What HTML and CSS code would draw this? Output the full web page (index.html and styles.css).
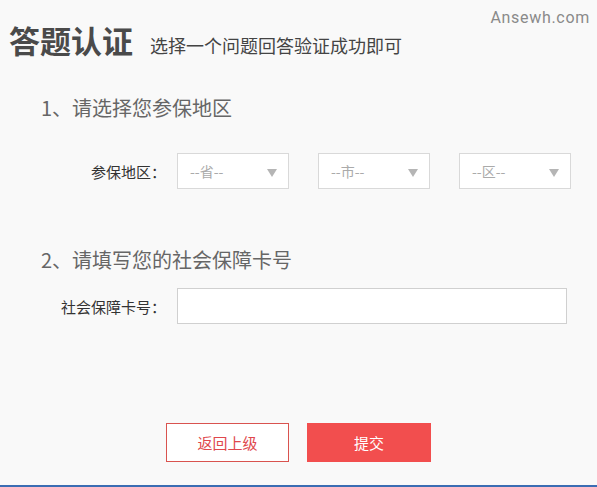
FILE: index.html
```html
<!DOCTYPE html>
<html lang="zh-CN">
  <head>
    <meta charset="UTF-8" />
    <meta name="viewport" content="width=device-width, initial-scale=1.0" />
    <title>答题认证</title>
    <link rel="stylesheet" href="styles.css">
  </head>
  <body>
    <div class="page">
      <div class="watermark">Ansewh.com</div>
      <header class="head">
        <h1 class="title">答题认证</h1>
        <span class="subtitle">选择一个问题回答验证成功即可</span>
      </header>

      <div class="step step-one">
        <h2 class="step-title">1、请选择您参保地区</h2>
        <div class="row">
          <label class="row-label">参保地区：</label>
          <div class="selects">
            <div class="select"><span>--省--</span><i class="arrow"></i></div>
            <div class="select"><span>--市--</span><i class="arrow"></i></div>
            <div class="select"><span>--区--</span><i class="arrow"></i></div>
          </div>
        </div>
      </div>

      <div class="step step-two">
        <h2 class="step-title">2、请填写您的社会保障卡号</h2>
        <div class="row">
          <label class="row-label">社会保障卡号：</label>
          <input class="card-input" type="text" />
        </div>
      </div>

      <div class="actions">
        <button class="btn btn-back">返回上级</button>
        <button class="btn btn-submit">提交</button>
      </div>
    </div>
  </body>
</html>
```

FILE: styles.css
```css
* {
  box-sizing: border-box;
}
body {
  margin: 0;
  background-color: #f9f9f9;
  font-family: "Noto Sans CJK SC", "Noto Sans", sans-serif;
}
.page {
  position: relative;
  height: 487px;
  border-bottom: 2px solid #3b6db3;
  display: flex;
  flex-direction: column;
}
.watermark {
  position: absolute;
  top: 8px;
  right: 7px;
  font-family: Roboto, "Liberation Sans", sans-serif;
  font-size: 16px;
  letter-spacing: 0.7px;
  color: #8a8a8a;
}
.head {
  display: flex;
  align-items: baseline;
  padding: 20px 0 0 9px;
}
.title {
  margin: 0;
  font-size: 31px;
  line-height: 40px;
  font-weight: bold;
  color: #4a4a4a;
}
.subtitle {
  margin-left: 17px;
  font-size: 18px;
  color: #444;
}
.step-title {
  margin: 0;
  padding-left: 41px;
  font-size: 20px;
  line-height: 28px;
  font-weight: normal;
  color: #666;
}
.step-one {
  margin-top: 34px;
}
.step-two {
  margin-top: 57px;
}
.row {
  display: flex;
  align-items: center;
}
.step-one .row {
  margin-top: 31px;
}
.step-two .row {
  margin-top: 14px;
}
.row-label {
  width: 168px;
  text-align: right;
  padding-right: 2px;
  font-size: 15px;
  color: #333;
}
.selects {
  display: flex;
  gap: 29px;
  margin-left: 9px;
}
.select {
  width: 112px;
  height: 36px;
  border: 1px solid #d9d9d9;
  background-color: #fff;
  display: flex;
  align-items: center;
  justify-content: space-between;
  padding: 0 11px 0 12px;
  font-size: 14px;
  color: #aaa;
}
.arrow {
  width: 0;
  height: 0;
  border-left: 5px solid transparent;
  border-right: 5px solid transparent;
  border-top: 8px solid #b5b5b5;
  margin-top: 3px;
}
.card-input {
  width: 390px;
  height: 36px;
  margin-left: 9px;
  border: 1px solid #d0d0d0;
  background-color: #fff;
  outline: none;
}
.actions {
  margin-top: auto;
  margin-bottom: 23px;
  display: flex;
  justify-content: center;
  gap: 18px;
}
.btn {
  height: 39px;
  font-family: "Noto Sans CJK SC", sans-serif;
  font-size: 15px;
  cursor: pointer;
}
.btn-back {
  width: 123px;
  background-color: #fff;
  border: 1px solid #d9534f;
  color: #e0474c;
}
.btn-submit {
  width: 124px;
  background-color: #f24e4e;
  border: none;
  color: #fff;
}
```
